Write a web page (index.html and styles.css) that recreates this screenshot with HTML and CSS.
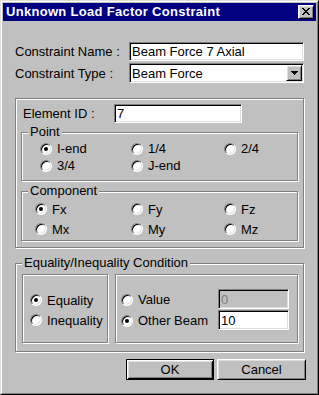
FILE: index.html
```html
<!DOCTYPE html>
<html lang="en">
<head>
    <meta charset="UTF-8">
    <meta name="viewport" content="width=device-width, initial-scale=1.0">
    <title>Unknown Load Factor Constraint</title>
    <link rel="stylesheet" href="styles.css">
</head>
<body>
    <div class="window">
        <div class="frame">
            <div class="titlebar">
                <span class="title">Unknown Load Factor Constraint</span>
                <span class="close-btn raised">
                    <svg width="8" height="7" viewBox="0 0 8 7" shape-rendering="crispEdges">
                        <path d="M0 0h2v1H0zM6 0h2v1H6zM1 1h2v1H1zM5 1h2v1H5zM2 2h4v1H2zM3 3h2v1H3zM2 4h4v1H2zM1 5h2v1H1zM5 5h2v1H5zM0 6h2v1H0zM6 6h2v1H6z" fill="#000"/>
                    </svg>
                </span>
            </div>

            <div class="content">
                <div class="field-row">
                    <label class="field-label">Constraint Name :</label>
                    <input class="text-input sunken" type="text" value="Beam Force 7 Axial">
                </div>
                <div class="field-row combo-row">
                    <label class="field-label">Constraint Type :</label>
                    <div class="combo sunken">
                        <span class="combo-text">Beam Force</span>
                        <span class="combo-btn raised">
                            <svg width="7" height="4" viewBox="0 0 7 4" shape-rendering="crispEdges">
                                <path d="M0 0h7v1H0zM1 1h5v1H1zM2 2h3v1H2zM3 3h1v1H3z" fill="#000"/>
                            </svg>
                        </span>
                    </div>
                </div>

                <div class="group main-group">
                    <div class="field-row id-row">
                        <label class="field-label id-label">Element ID :</label>
                        <input class="text-input id-input sunken" type="text" value="7">
                    </div>

                    <div class="group point-group">
                        <span class="group-title">Point</span>
                        <div class="radio-grid point-grid">
                            <label class="radio"><span class="radio-mark checked"></span>I-end</label>
                            <label class="radio"><span class="radio-mark"></span>1/4</label>
                            <label class="radio"><span class="radio-mark"></span>2/4</label>
                            <label class="radio"><span class="radio-mark"></span>3/4</label>
                            <label class="radio"><span class="radio-mark"></span>J-end</label>
                        </div>
                    </div>

                    <div class="group component-group">
                        <span class="group-title">Component</span>
                        <div class="radio-grid component-grid">
                            <label class="radio"><span class="radio-mark checked"></span>Fx</label>
                            <label class="radio"><span class="radio-mark"></span>Fy</label>
                            <label class="radio"><span class="radio-mark"></span>Fz</label>
                            <label class="radio"><span class="radio-mark"></span>Mx</label>
                            <label class="radio"><span class="radio-mark"></span>My</label>
                            <label class="radio"><span class="radio-mark"></span>Mz</label>
                        </div>
                    </div>
                </div>

                <div class="group condition-group">
                    <span class="group-title">Equality/Inequality Condition</span>
                    <div class="condition-body">
                        <div class="subbox kind-box">
                            <label class="radio cond-row"><span class="radio-mark checked"></span>Equality</label>
                            <label class="radio cond-row"><span class="radio-mark"></span>Inequality</label>
                        </div>
                        <div class="subbox target-box">
                            <div class="target-row">
                                <label class="radio"><span class="radio-mark"></span>Value</label>
                                <input class="text-input small-input sunken disabled" type="text" value="0" disabled>
                            </div>
                            <div class="target-row">
                                <label class="radio"><span class="radio-mark checked"></span>Other Beam</label>
                                <input class="text-input small-input sunken" type="text" value="10">
                            </div>
                        </div>
                    </div>
                </div>

                <div class="button-row">
                    <button class="btn btn-default" type="button">OK</button>
                    <button class="btn raised" type="button">Cancel</button>
                </div>
            </div>
        </div>
    </div>
</body>
</html>
```

FILE: styles.css
```css
* {
    margin: 0;
    padding: 0;
    box-sizing: border-box;
}

body {
    font-family: 'Liberation Sans', Arial, sans-serif;
    font-size: 13px;
    color: #000;
    background-color: #c0c0c0;
}

/* Window chrome */
.window {
    width: 319px;
    height: 395px;
    background-color: #c0c0c0;
    border: 1px solid;
    border-color: #dfdfdf #000 #000 #dfdfdf;
}

.frame {
    height: 100%;
    padding: 1px;
    border: 1px solid;
    border-color: #fff #808080 #808080 #fff;
}

.titlebar {
    height: 18px;
    background-color: #000080;
    color: #fff;
    font-weight: bold;
    display: flex;
    align-items: center;
    justify-content: space-between;
    padding: 0 2px 0 3px;
    line-height: 18px;
}

.title {
    letter-spacing: 0.3px;
}

.raised {
    background-color: #c0c0c0;
    border: 1px solid;
    border-color: #fff #000 #000 #fff;
    box-shadow: inset 1px 1px 0 #dfdfdf, inset -1px -1px 0 #808080;
}

.sunken {
    background-color: #fff;
    border: 1px solid;
    border-color: #808080 #fff #fff #808080;
    box-shadow: inset 1px 1px 0 #000, inset -1px -1px 0 #dfdfdf;
}

.close-btn {
    width: 16px;
    height: 14px;
    display: flex;
    align-items: center;
    justify-content: center;
}

.close-btn svg {
    margin-top: -1px;
    margin-left: -1px;
}

/* Form */
.content {
    padding: 21px 12px 0;
}

.field-row {
    display: flex;
    align-items: center;
    height: 19px;
    line-height: 19px;
}

.combo-row {
    margin-top: 2px;
    height: 20px;
}

.field-label {
    width: 114px;
    flex: none;
    white-space: nowrap;
}

.text-input {
    font-family: inherit;
    font-size: 13px;
    color: #000;
    height: 19px;
    padding: 0 2px;
    outline: none;
}

.field-row .text-input {
    flex: 1;
    min-width: 0;
}

.combo {
    flex: 1;
    height: 20px;
    display: flex;
    align-items: center;
    justify-content: space-between;
    padding: 0 1px 0 2px;
}

.combo-btn {
    width: 16px;
    height: 16px;
    display: flex;
    align-items: center;
    justify-content: center;
}

/* Etched group boxes */
.group {
    position: relative;
    border: 1px solid #808080;
    box-shadow: inset 1px 1px 0 #fff, 1px 1px 0 #fff;
}

.group-title {
    position: absolute;
    top: -9px;
    left: 6px;
    padding: 0 2px;
    line-height: 15px;
    background-color: #c0c0c0;
    white-space: nowrap;
}

.main-group {
    margin-top: 15px;
    padding: 5px 5px 6px;
}

.id-row {
    margin-left: 2px;
}

.id-label {
    width: 91px;
}

.field-row .id-input {
    flex: none;
    width: 128px;
}

.point-group {
    margin-top: 9px;
    padding: 7px 0 6px 18px;
}

.component-group {
    margin-top: 10px;
    padding: 7px 0 1px 13px;
}

.radio-grid {
    display: grid;
}

.point-grid {
    grid-template-columns: 91px 93px auto;
    grid-auto-rows: 17px;
}

.component-grid {
    grid-template-columns: 96px 93px auto;
    grid-auto-rows: 20px;
}

.radio {
    display: flex;
    align-items: center;
    gap: 5px;
    white-space: nowrap;
}

.radio-mark {
    position: relative;
    flex: none;
    width: 12px;
    height: 12px;
    border-radius: 50%;
    background-color: #fff;
    border: 1px solid;
    border-color: #808080 #fff #fff #808080;
    box-shadow: inset 1px 1px 0 #000, inset -1px -1px 0 #dfdfdf;
}

.radio-mark.checked::after {
    content: '';
    position: absolute;
    left: 3px;
    top: 3px;
    width: 4px;
    height: 4px;
    border-radius: 50%;
    background-color: #000;
}

/* Equality / inequality */
.condition-group {
    margin-top: 15px;
    padding: 10px 5px 8px 6px;
}

.condition-body {
    display: flex;
    gap: 7px;
}

.subbox {
    height: 69px;
    border: 1px solid #808080;
    box-shadow: inset 1px 1px 0 #fff, 1px 1px 0 #fff;
}

.kind-box {
    width: 86px;
    flex: none;
    padding: 15px 0 0 7px;
}

.cond-row {
    height: 20px;
}

.target-box {
    flex: 1;
    padding: 14px 8px 0 5px;
}

.target-row {
    display: flex;
    align-items: center;
    justify-content: space-between;
    height: 21px;
}

.small-input {
    width: 71px;
    height: 20px;
    align-self: flex-start;
}

.small-input.disabled {
    background-color: #c0c0c0;
    color: #808080;
}

/* Buttons */
.button-row {
    display: flex;
    justify-content: flex-end;
    gap: 3px;
    margin-top: 7px;
    margin-right: -2px;
}

.btn {
    width: 88px;
    height: 21px;
    font-family: inherit;
    font-size: 13px;
    color: #000;
    cursor: pointer;
}

.btn + .btn {
    width: 89px;
}

.btn-default {
    background-color: #c0c0c0;
    border: 1px solid #000;
    box-shadow: inset 1px 1px 0 #fff, inset -1px -1px 0 #000, inset 2px 2px 0 #dfdfdf, inset -2px -2px 0 #808080;
}
```
